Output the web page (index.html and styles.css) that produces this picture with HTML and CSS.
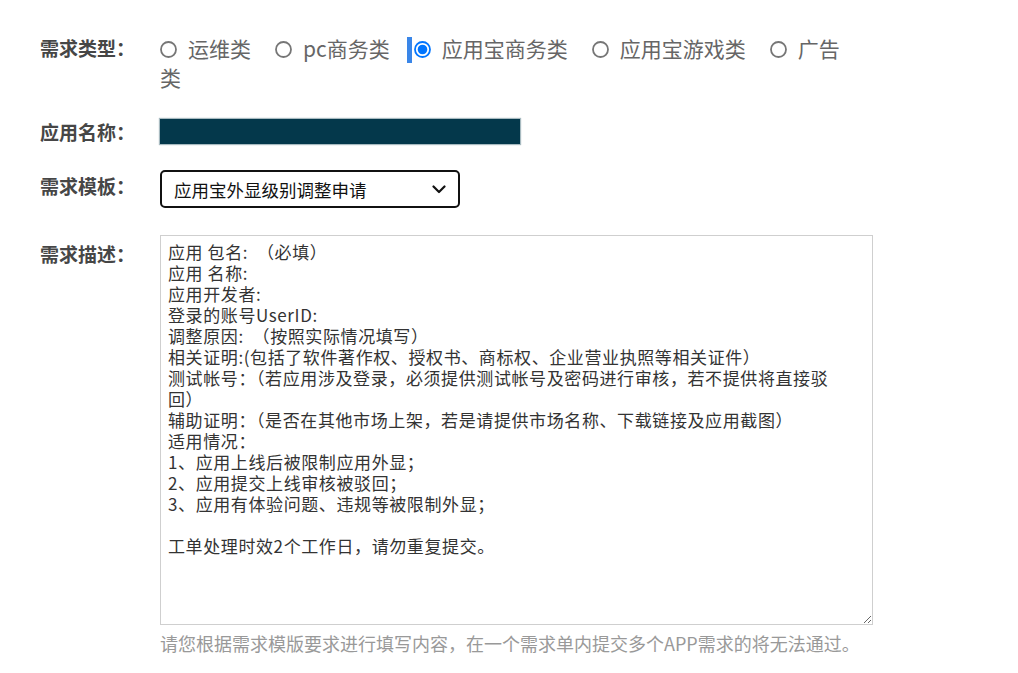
FILE: index.html
```html
<!DOCTYPE html>
<html lang="zh-CN">
<head>
<meta charset="utf-8">
<title>需求表单</title>
<link rel="stylesheet" href="styles.css">
</head>
<body>
<form class="form">
  <div class="row row-type">
    <div class="label">需求类型：</div>
    <div class="options"><label class="opt"><svg class="radio" width="17" height="17" viewBox="0 0 17 17"><circle cx="8.5" cy="8.5" r="7.5" fill="#fff" stroke="#767676" stroke-width="1.8"/></svg>运维类</label><label class="opt"><svg class="radio" width="17" height="17" viewBox="0 0 17 17"><circle cx="8.5" cy="8.5" r="7.5" fill="#fff" stroke="#767676" stroke-width="1.8"/></svg>pc商务类</label><label class="opt opt-focus"><span class="sel-bar"></span><svg class="radio" width="17" height="17" viewBox="0 0 17 17"><circle cx="8.5" cy="8.5" r="7.5" fill="#fff" stroke="#0075ff" stroke-width="1.8"/><circle cx="8.5" cy="8.5" r="4.8" fill="#0075ff"/></svg>应用宝商务类</label><label class="opt"><svg class="radio" width="17" height="17" viewBox="0 0 17 17"><circle cx="8.5" cy="8.5" r="7.5" fill="#fff" stroke="#767676" stroke-width="1.8"/></svg>应用宝游戏类</label><label class="opt opt-last"><svg class="radio" width="17" height="17" viewBox="0 0 17 17"><circle cx="8.5" cy="8.5" r="7.5" fill="#fff" stroke="#767676" stroke-width="1.8"/></svg>广告</label>类</div>
  </div>
  <div class="row row-name">
    <div class="label">应用名称：</div>
    <div class="name-mask"></div>
  </div>
  <div class="row row-tpl">
    <div class="label">需求模板：</div>
    <div class="select-wrap">
      <select class="select">
        <option>应用宝外显级别调整申请</option>
      </select>
      <svg class="chev" width="14" height="9" viewBox="0 0 14 9"><path d="M1.5 1.5 L7 7 L12.5 1.5" fill="none" stroke="#111" stroke-width="2.2" stroke-linecap="round" stroke-linejoin="round"/></svg>
    </div>
  </div>
  <div class="row row-desc">
    <div class="label">需求描述：</div>
    <div class="desc">
      <textarea class="textarea">应用 包名:  （必填）
应用 名称:
应用开发者:
登录的账号UserID:
调整原因:  （按照实际情况填写）
相关证明:(包括了软件著作权、授权书、商标权、企业营业执照等相关证件）
测试帐号：（若应用涉及登录，必须提供测试帐号及密码进行审核，若不提供将直接驳回）
辅助证明：（是否在其他市场上架，若是请提供市场名称、下载链接及应用截图）
适用情况：
1、应用上线后被限制应用外显；
2、应用提交上线审核被驳回；
3、应用有体验问题、违规等被限制外显；

工单处理时效2个工作日，请勿重复提交。</textarea>
      <div class="hint">请您根据需求模版要求进行填写内容，在一个需求单内提交多个APP需求的将无法通过。</div>
    </div>
  </div>
</form>
</body>
</html>
```
FILE: styles.css
```css
html, body {
  margin: 0;
  padding: 0;
  background: #fff;
}
body {
  font-family: "Noto Sans CJK SC", "Noto Sans", sans-serif;
  color: #333;
}
.form {
  padding: 34px 0 0 40px;
}
.row {
  display: flex;
  align-items: flex-start;
}
.label {
  width: 120px;
  flex: none;
  font-size: 19px;
  font-weight: 700;
  line-height: 28px;
  color: #464646;
}
.options {
  width: 690px;
  font-size: 21px;
  line-height: 28px;
  color: #666;
}
.opt {
  margin-right: 24px;
}
.opt-last {
  margin-right: 0;
}
.radio {
  display: inline-block;
  width: 17px;
  height: 17px;
  margin-right: 11px;
  vertical-align: -1px;
}
.sel-bar {
  display: inline-block;
  width: 5px;
  height: 26px;
  background: #3a86e8;
  margin-left: -7px;
  margin-right: 2px;
  vertical-align: -6px;
}
.row-name {
  margin-top: 28px;
  align-items: center;
}
.row-name .label {
  line-height: 25px;
}
.name-mask {
  width: 360px;
  height: 25px;
  background: #04384b;
  box-shadow: 0 0 1px 1px rgba(4, 56, 75, 0.35);
}
.row-tpl {
  margin-top: 26px;
}
.row-tpl .label {
  margin-top: 2px;
}
.select-wrap {
  position: relative;
  width: 300px;
  height: 38px;
}
.select {
  appearance: none;
  -webkit-appearance: none;
  box-sizing: border-box;
  width: 300px;
  height: 38px;
  border: 2px solid #111;
  border-radius: 5px;
  background: #fff;
  padding: 0 0 0 12px;
  font-family: "Noto Sans CJK SC", sans-serif;
  font-size: 17.5px;
  color: #111;
  outline: none;
}
.chev {
  position: absolute;
  right: 14px;
  top: 15px;
  pointer-events: none;
}
.row-desc {
  margin-top: 27px;
}
.row-desc .label {
  margin-top: 5px;
}
.textarea {
  display: block;
  box-sizing: border-box;
  width: 713px;
  height: 390px;
  margin: 0;
  border: 1px solid #cfcfcf;
  border-radius: 0;
  padding: 5px 28px 0 7px;
  font-family: "Noto Sans CJK SC", sans-serif;
  font-size: 17px;
  letter-spacing: 0.6px;
  line-height: 21px;
  color: #333;
  background: #fff;
  outline: none;
  overflow: hidden;
}
.hint {
  margin-top: 7px;
  font-size: 18px;
  line-height: 22px;
  color: #999;
}
```
